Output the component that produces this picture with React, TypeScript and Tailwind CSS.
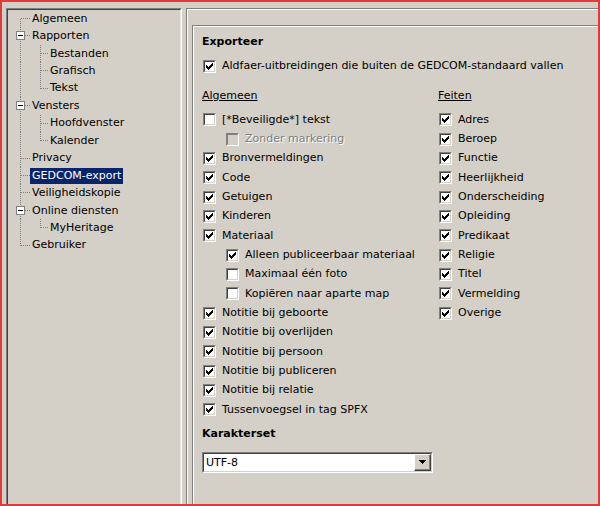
const FONT = "font-['DejaVu_Sans',sans-serif]";

type TreeItem = { t: string; l: 0 | 1; exp?: boolean; last?: boolean; sel?: boolean };

const TREE: TreeItem[] = [
  { t: 'Algemeen', l: 0 },
  { t: 'Rapporten', l: 0, exp: true },
  { t: 'Bestanden', l: 1 },
  { t: 'Grafisch', l: 1 },
  { t: 'Tekst', l: 1, last: true },
  { t: 'Vensters', l: 0, exp: true },
  { t: 'Hoofdvenster', l: 1 },
  { t: 'Kalender', l: 1, last: true },
  { t: 'Privacy', l: 0 },
  { t: 'GEDCOM-export', l: 0, sel: true },
  { t: 'Veiligheidskopie', l: 0 },
  { t: 'Online diensten', l: 0, exp: true },
  { t: 'MyHeritage', l: 1, last: true },
  { t: 'Gebruiker', l: 0, last: true },
];

const ALGEMEEN: { t: string; on: boolean; sub?: boolean; off?: boolean }[] = [
  { t: '[*Beveiligde*] tekst', on: false },
  { t: 'Zonder markering', on: false, sub: true, off: true },
  { t: 'Bronvermeldingen', on: true },
  { t: 'Code', on: true },
  { t: 'Getuigen', on: true },
  { t: 'Kinderen', on: true },
  { t: 'Materiaal', on: true },
  { t: 'Alleen publiceerbaar materiaal', on: true, sub: true },
  { t: 'Maximaal één foto', on: false, sub: true },
  { t: 'Kopiëren naar aparte map', on: false, sub: true },
  { t: 'Notitie bij geboorte', on: true },
  { t: 'Notitie bij overlijden', on: true },
  { t: 'Notitie bij persoon', on: true },
  { t: 'Notitie bij publiceren', on: true },
  { t: 'Notitie bij relatie', on: true },
  { t: 'Tussenvoegsel in tag SPFX', on: true },
];

const FEITEN = [
  'Adres', 'Beroep', 'Functie', 'Heerlijkheid', 'Onderscheiding', 'Opleiding',
  'Predikaat', 'Religie', 'Titel', 'Vermelding', 'Overige',
];

// classic 7x7 check glyph
const CHECK = [
  [6], [5, 6], [0, 4, 5, 6], [0, 1, 3, 4, 5], [0, 1, 2, 3, 4], [1, 2, 3], [2],
];

function Check() {
  return (
    <svg width="9" height="9" viewBox="0 0 9 9" shapeRendering="crispEdges" className="block">
      {CHECK.map((cols, r) =>
        cols.map(c => <rect key={`${r}-${c}`} x={c + 1} y={r + 1} width="1" height="1" fill="#000" />)
      )}
    </svg>
  );
}

function Box({ checked, disabled }: { checked: boolean; disabled?: boolean }) {
  return (
    <span className="block w-[13px] h-[13px] shrink-0 border border-t-[#808080] border-l-[#808080] border-r-white border-b-white">
      <span
        className={`block w-full h-full border ${disabled ? 'border-t-[#808080] border-l-[#808080] bg-[#d4d0c8]' : 'border-t-[#404040] border-l-[#404040] bg-white'} border-r-[#d4d0c8] border-b-[#d4d0c8]`}
      >
        {checked && <Check />}
      </span>
    </span>
  );
}

function CheckRow({ label, checked, sub, disabled }: { label: string; checked: boolean; sub?: boolean; disabled?: boolean }) {
  return (
    <div className={`flex items-center h-[19.33px] gap-[6px] ${sub ? 'pl-[24px]' : 'pl-px'}`}>
      <Box checked={checked} disabled={disabled} />
      <span className={`whitespace-nowrap ${disabled ? 'text-[#808080] [text-shadow:1px_1px_0_#fff]' : 'text-black'}`}>
        {label}
      </span>
    </div>
  );
}

function TreeRow({ item, first, lastTop }: { item: TreeItem; first: boolean; lastTop: boolean }) {
  const w = item.l === 0 ? 22 : 40;
  const dash = { stroke: '#808080', strokeDasharray: '1 1', strokeWidth: 1 };
  return (
    <div className="flex items-center h-[17.45px]">
      <svg width={w} height="17.45" viewBox={`0 0 ${w} 17.45`} shapeRendering="crispEdges" className="shrink-0">
        <line x1="12.5" x2="12.5" y1={first ? 9 : 0} y2={lastTop ? 9 : 17.45} {...dash} />
        {item.l === 0 ? (
          <line x1="13" x2="22" y1="8.5" y2="8.5" {...dash} />
        ) : (
          <>
            <line x1="32.5" x2="32.5" y1="0" y2={item.last ? 9 : 17.45} {...dash} />
            <line x1="33" x2="40" y1="8.5" y2="8.5" {...dash} />
          </>
        )}
        {item.exp && (
          <>
            <rect x="8.5" y="4.5" width="8" height="8" fill="#fff" stroke="#808080" />
            <line x1="10" x2="15" y1="8.5" y2="8.5" stroke="#000" />
          </>
        )}
      </svg>
      <span
        className={`px-[2px] h-[16px] leading-[16px] whitespace-nowrap ${item.sel ? 'bg-[#0a246a] text-white' : 'text-black'}`}
      >
        {item.t}
      </span>
    </div>
  );
}

export default function App() {
  return (
    <div className={`w-[600px] h-[506px] overflow-hidden border-2 border-[#e23a3a] bg-[#d4d0c8] text-[11px] ${FONT}`}>
      <div className="flex h-full">
        {/* tree panel */}
        <div className="ml-[4px] mt-[6px] w-[176px] shrink-0 h-[520px] border border-t-[#808080] border-l-[#808080] border-r-white border-b-white">
          <div className="h-full border border-t-[#404040] border-l-[#404040] border-r-[#e8e6e0] border-b-[#e8e6e0] bg-[#d4d0c8]">
            {TREE.map((it, i) => (
              <TreeRow key={it.t} item={it} first={i === 0} lastTop={i === TREE.length - 1} />
            ))}
          </div>
        </div>

        {/* settings page */}
        <div className="ml-[4px] mt-[6px] flex-1 h-[520px] border-l border-t border-[#808080]">
          <div className="h-full border-l border-t border-white">
            <div className="ml-[4px] mt-[15px] h-[520px] border-l border-t border-[#808080]">
              <div className="h-full border-l border-t border-white pl-[8px] pt-[7px]">
                <div className="font-bold h-[16px] leading-[16px]">Exporteer</div>
                <div className="mt-[7px]">
                  <CheckRow label="Aldfaer-uitbreidingen die buiten de GEDCOM-standaard vallen" checked />
                </div>

                <div className="flex mt-[12px]">
                  <div className="w-[236px] shrink-0">
                    <div className="underline h-[16px] leading-[16px] mb-[6px]">Algemeen</div>
                    {ALGEMEEN.map(r => (
                      <CheckRow key={r.t} label={r.t} checked={r.on} sub={r.sub} disabled={r.off} />
                    ))}
                  </div>
                  <div>
                    <div className="underline h-[16px] leading-[16px] mb-[6px]">Feiten</div>
                    {FEITEN.map(t => (
                      <CheckRow key={t} label={t} checked />
                    ))}
                  </div>
                </div>

                <div className="font-bold h-[16px] leading-[16px] mt-[6px]">Karakterset</div>
                <div className="mt-[10px] w-[231px] h-[21px] border border-t-[#808080] border-l-[#808080] border-r-white border-b-white">
                  <div className="h-full flex items-stretch border border-t-[#404040] border-l-[#404040] border-r-[#d4d0c8] border-b-[#d4d0c8] bg-white">
                    <span className="flex-1 pl-[2px] leading-[17px]">UTF-8</span>
                    <span className="w-[17px] flex items-center justify-center bg-[#d4d0c8] border border-t-white border-l-white border-r-[#404040] border-b-[#404040] shadow-[inset_-1px_-1px_0_#808080]">
                      <svg width="7" height="4" viewBox="0 0 7 4" shapeRendering="crispEdges">
                        <path d="M0 0h7v1H0zM1 1h5v1H1zM2 2h3v1H2zM3 3h1v1H3z" fill="#000" />
                      </svg>
                    </span>
                  </div>
                </div>
              </div>
            </div>
          </div>
        </div>
      </div>
    </div>
  );
}
